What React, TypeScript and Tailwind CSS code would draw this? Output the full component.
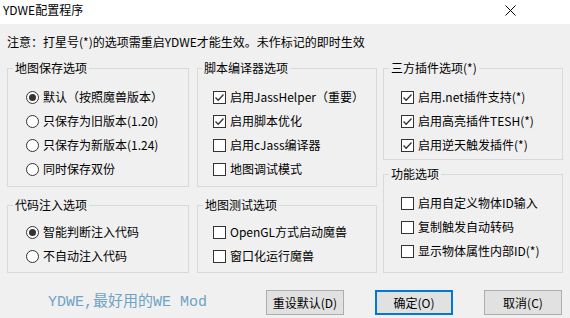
import React from 'react';

const FONT = { fontFamily: '"Noto Sans CJK SC", "Noto Sans", sans-serif' };

type Item = { label: string; checked?: boolean };

const Radio = ({ checked }: { checked?: boolean }) => (
  <span className="w-[13px] h-[13px] shrink-0 rounded-full border border-[#333] bg-white flex items-center justify-center">
    {checked && <span className="w-[7px] h-[7px] rounded-full bg-[#333]" />}
  </span>
);

const Check = ({ checked }: { checked?: boolean }) => (
  <span className="w-[13px] h-[13px] shrink-0 border border-[#333] bg-white flex items-center justify-center">
    {checked && (
      <svg width="11" height="11" viewBox="0 0 11 11">
        <path d="M1.5 5.5 L4.2 8.2 L9.5 2.5" fill="none" stroke="#333" strokeWidth="1.3" />
      </svg>
    )}
  </span>
);

const Group = ({
  title,
  items,
  kind,
  className,
  pl,
  legendMl = 'ml-[5px]',
}: {
  title: string;
  items: Item[];
  kind: 'radio' | 'check';
  className: string;
  pl: string;
  legendMl?: string;
}) => (
  <fieldset className={`border border-[#d9d9d9] ${className}`}>
    <legend className={`${legendMl} px-[2px] h-[18px] leading-[18px] text-[12px]`}>{title}</legend>
    <div className={`flex flex-col ${pl}`}>
      {items.map((it) => (
        <div key={it.label} className="h-[24px] flex items-center gap-[4px] text-[12px] leading-[16px] whitespace-nowrap">
          {kind === 'radio' ? <Radio checked={it.checked} /> : <Check checked={it.checked} />}
          <span>{it.label}</span>
        </div>
      ))}
    </div>
  </fieldset>
);

const Button = ({ label, primary }: { label: string; primary?: boolean }) => (
  <button
    className={`w-[78px] h-[25px] bg-[#e1e1e1] text-[12px] leading-[16px] text-black flex items-center justify-center ${
      primary ? 'border-2 border-[#0078d7]' : 'border border-[#adadad]'
    }`}
  >
    {label}
  </button>
);

export default function App() {
  return (
    <div className="w-[570px] h-[318px] bg-[#f0f0f0] text-black overflow-hidden" style={FONT}>
      {/* title bar */}
      <div className="h-[24px] bg-white flex items-start justify-between pl-[3px] pr-[54px]">
        <span className="mt-[2px] text-[12px] leading-[16px]">YDWE配置程序</span>
        <svg width="11" height="11" viewBox="0 0 11 11" className="mt-[5px]">
          <path d="M0.5 0.5 L10.5 10.5 M10.5 0.5 L0.5 10.5" stroke="#000" strokeWidth="1" />
        </svg>
      </div>

      <div className="pl-[7px] mt-[9px] h-[18px] leading-[18px] text-[12px] whitespace-nowrap">
        注意：打星号(*)的选项需重启YDWE才能生效。未作标记的即时生效
      </div>

      <div className="flex pl-[7px] mt-[8px]">
        <div className="w-[182px] flex flex-col">
          <Group
            title="地图保存选项"
            kind="radio"
            pl="pl-[18px] pt-[8px] pb-[5px]"
            className=""
            items={[
              { label: '默认（按照魔兽版本）', checked: true },
              { label: '只保存为旧版本(1.20)' },
              { label: '只保存为新版本(1.24)' },
              { label: '同时保存双份' },
            ]}
          />
          <Group
            title="代码注入选项"
            kind="radio"
            pl="pl-[18px] pt-[6px] pb-[4px]"
            className="mt-[9px]"
            items={[{ label: '智能判断注入代码', checked: true }, { label: '不自动注入代码' }]}
          />
        </div>

        <div className="w-[180px] ml-[8px] flex flex-col">
          <Group
            title="脚本编译器选项"
            kind="check"
            legendMl="ml-[4px]"
            pl="pl-[15px] pt-[8px] pb-[5px]"
            className=""
            items={[
              { label: '启用JassHelper（重要）', checked: true },
              { label: '启用脚本优化', checked: true },
              { label: '启用cJass编译器' },
              { label: '地图调试模式' },
            ]}
          />
          <Group
            title="地图测试选项"
            kind="check"
            legendMl="ml-[5px]"
            pl="pl-[15px] pt-[6px] pb-[4px]"
            className="mt-[9px]"
            items={[{ label: 'OpenGL方式启动魔兽' }, { label: '窗口化运行魔兽' }]}
          />
        </div>

        <div className="w-[180px] ml-[6px] flex flex-col">
          <Group
            title="三方插件选项(*)"
            kind="check"
            pl="pl-[17px] pt-[8px] pb-[2px]"
            className=""
            items={[
              { label: '启用.net插件支持(*)', checked: true },
              { label: '启用高亮插件TESH(*)', checked: true },
              { label: '启用逆天触发插件(*)', checked: true },
            ]}
          />
          <Group
            title="功能选项"
            kind="check"
            pl="pl-[17px] pt-[8px] pb-[9px]"
            className="mt-[5px]"
            items={[
              { label: '启用自定义物体ID输入' },
              { label: '复制触发自动转码' },
              { label: '显示物体属性内部ID(*)' },
            ]}
          />
        </div>
      </div>

      <div className="flex items-center h-[25px] mt-[17px] pl-[48px] pr-[8px]">
        <span
          className="text-[15px] leading-[20px] text-[#6fa3c6] whitespace-nowrap"
          style={{ fontFamily: '"Liberation Mono", "Noto Sans CJK SC", monospace' }}
        >
          YDWE,最好用的WE Mod
        </span>
        <div className="ml-auto flex gap-[31px]">
          <Button label="重设默认(D)" />
          <Button label="确定(O)" primary />
          <Button label="取消(C)" />
        </div>
      </div>
    </div>
  );
}
